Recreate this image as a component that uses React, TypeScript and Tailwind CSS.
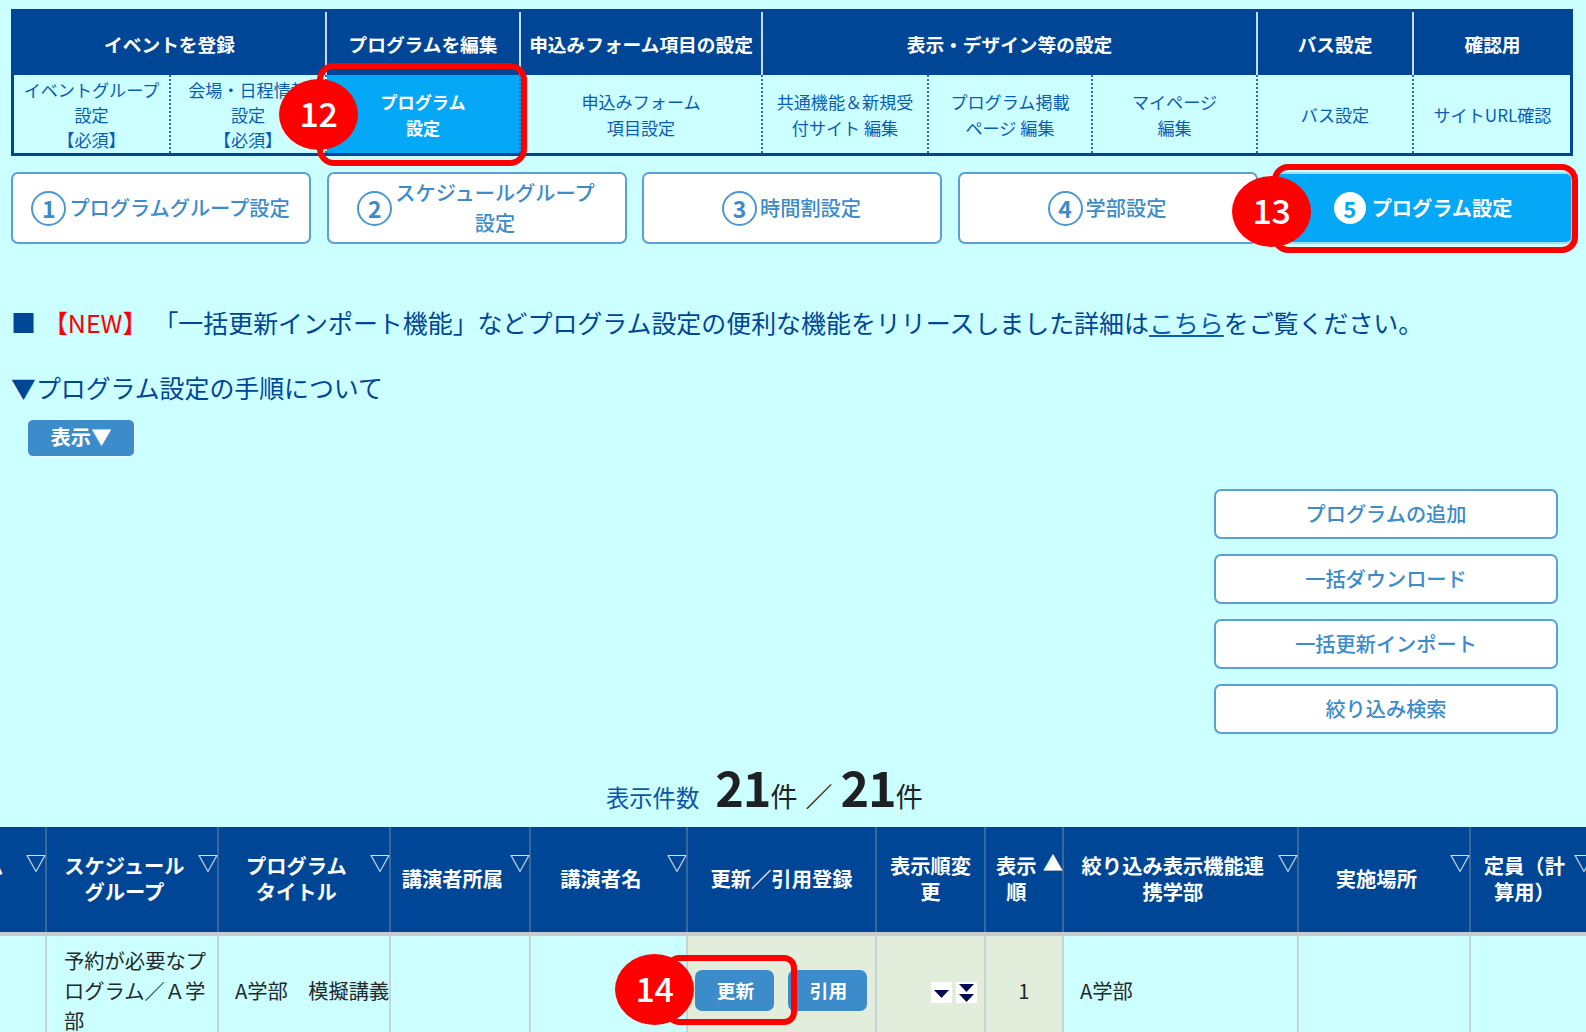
import { clsx } from "clsx";

type NavGroup = {
  title: string;
  width: string;
  items: { label: string; width: string; active?: boolean }[];
};

const navGroups: NavGroup[] = [
  {
    title: "イベントを登録",
    width: "w-[313px]",
    items: [
      { label: "イベントグループ\n設定\n【必須】", width: "w-[157px]" },
      { label: "会場・日程情報\n設定\n【必須】", width: "w-[156px]" },
    ],
  },
  {
    title: "プログラムを編集",
    width: "w-[194px]",
    items: [{ label: "プログラム\n設定", width: "w-[194px]", active: true }],
  },
  {
    title: "申込みフォーム項目の設定",
    width: "w-[242px]",
    items: [{ label: "申込みフォーム\n項目設定", width: "w-[242px]" }],
  },
  {
    title: "表示・デザイン等の設定",
    width: "w-[495px]",
    items: [
      { label: "共通機能＆新規受\n付サイト 編集", width: "w-[166px]" },
      { label: "プログラム掲載\nページ 編集", width: "w-[164px]" },
      { label: "マイページ\n編集", width: "w-[165px]" },
    ],
  },
  {
    title: "バス設定",
    width: "w-[156px]",
    items: [{ label: "バス設定", width: "w-[156px]" }],
  },
  {
    title: "確認用",
    width: "w-[157px]",
    items: [{ label: "サイトURL確認", width: "w-[157px]" }],
  },
];

const steps = [
  { no: 1, label: "プログラムグループ設定" },
  { no: 2, label: "スケジュールグループ\n設定" },
  { no: 3, label: "時間割設定" },
  { no: 4, label: "学部設定" },
  { no: 5, label: "プログラム設定", active: true },
];

const actions = ["プログラムの追加", "一括ダウンロード", "一括更新インポート", "絞り込み検索"];

const columns = [
  { label: "スケジュール\nグループ", sort: "▽" },
  { label: "プログラム\nタイトル", sort: "▽" },
  { label: "講演者所属", sort: "▽" },
  { label: "講演者名", sort: "▽" },
  { label: "更新／引用登録" },
  { label: "表示順変\n更" },
  { label: "表示\n順", sort: "▲" },
  { label: "絞り込み表示機能連\n携学部", sort: "▽" },
  { label: "実施場所", sort: "▽" },
  { label: "定員（計\n算用）", sort: "▽" },
];

const tableGrid =
  "grid w-[1595px] grid-cols-[47px_172px_172px_140px_157px_189px_109px_78px_235px_172px_124px]";

function Navigation() {
  return (
    <nav className="flex h-[147px] w-[1562px] border-[3px] border-[#004696] text-center">
      {navGroups.map((group, i) => (
        <div key={group.title} className={clsx("flex shrink-0 flex-col", group.width)}>
          <div
            className={clsx(
              "flex h-[63px] items-center justify-center bg-[#004696] pt-0.5 text-[18.7px] font-bold whitespace-nowrap text-white",
              i < navGroups.length - 1 && "border-r-2 border-[#c9dcee]",
            )}
          >
            {group.title}
          </div>
          <div className="flex h-[78px]">
            {group.items.map((item, j) => (
              <div
                key={item.label}
                className={clsx(
                  "flex shrink-0 items-center justify-center pt-px text-[17.1px] leading-[25.3px] whitespace-pre",
                  item.width,
                  item.active ? "bg-[#04a8f6] font-bold text-white" : "text-[#0b5cb4]",
                  (i < navGroups.length - 1 || j < group.items.length - 1) &&
                    "border-r-2 border-dotted border-[#2a6cb4]",
                )}
              >
                {item.label}
              </div>
            ))}
          </div>
        </div>
      ))}
    </nav>
  );
}

function StepTabs() {
  return (
    <div className="mt-4 flex w-[1562px] justify-between">
      {steps.map((step) => (
        <button
          key={step.no}
          type="button"
          className={clsx(
            "flex h-[72px] w-[300px] items-center justify-center rounded-[7px] border-2 text-[20.2px] leading-[30px] whitespace-pre",
            step.active
              ? "border-[#9be0fb] bg-[#04a8f6] font-bold text-white"
              : "border-[#5c9fd6] bg-white pr-px font-medium text-[#3c8bca]",
          )}
        >
          <span
            className={clsx(
              "flex shrink-0 items-center justify-center rounded-full font-bold",
              step.active
                ? "mr-1.5 size-8 bg-white text-[22px] text-[#04a8f6]"
                : "mr-[3px] size-[35px] border-2 border-[#4d97d1] text-[23px]",
            )}
          >
            {step.no}
          </span>
          {step.label}
        </button>
      ))}
    </div>
  );
}

function MoveIcon({ double }: { double?: boolean }) {
  return (
    <svg className="size-[21px] bg-white" viewBox="0 0 21 21" fill="#000c50">
      {double ? <path d="M3 2h15l-7.5 8zM3 12h15l-7.5 8z" /> : <path d="M3 8h15l-7.5 8z" />}
    </svg>
  );
}

function ProgramTable() {
  return (
    <div className="text-[20.3px]">
      <div className={clsx(tableGrid, "h-[105px] bg-[#004696] font-bold text-white")}>
        <div className="relative flex border-r-2 border-[#386898]">
          <span className="absolute top-[25px] -left-[17px] leading-[26px]">ム</span>
          <span className="mt-5 -mr-px ml-auto leading-[30px] font-medium">▽</span>
        </div>
        {columns.map((column) => (
          <div key={column.label} className="flex border-r-2 border-[#386898]">
            <span className="flex flex-1 items-center justify-center pb-1 text-center leading-[26px] whitespace-pre">
              {column.label}
            </span>
            {column.sort && (
              <span className="mt-5 -mr-px -ml-1 leading-[30px] font-medium">{column.sort}</span>
            )}
          </div>
        ))}
      </div>
      <div
        className={clsx(
          tableGrid,
          "h-[112px] border-t-[4px] border-[#c8cccf] text-[#24282c] *:flex *:items-center *:border-r-2 *:border-[#c8d4d4] *:whitespace-pre",
        )}
      >
        <div />
        <div className="pl-[17px] leading-[30.3px]">{"予約が必要なプ\nログラム／Ａ学\n部"}</div>
        <div className="overflow-hidden pl-4">A学部　模擬講義</div>
        <div />
        <div />
        <div className="gap-[14px] bg-[#e2eedb] pl-[7px]">
          <button
            type="button"
            className="h-[41px] w-[79px] rounded-[7px] bg-[#3c8bca] pl-0.5 text-[18.7px] font-bold text-white"
          >
            更新
          </button>
          <button
            type="button"
            className="h-[41px] w-[79px] rounded-[7px] bg-[#3c8bca] pl-0.5 text-[18.7px] font-bold text-white"
          >
            引用
          </button>
        </div>
        <div className="justify-end gap-1 bg-[#e2eedb] pt-1 pr-[7px]">
          <MoveIcon />
          <MoveIcon double />
        </div>
        <div className="justify-center bg-[#e2eedb]">1</div>
        <div className="pl-4">A学部</div>
        <div />
        <div />
      </div>
    </div>
  );
}

function Callout({ no, frame, badge }: { no: number; frame: string; badge: string }) {
  return (
    <>
      <div className={clsx("absolute border-[6px] border-[#ff0000]", frame)} />
      <div
        className={clsx(
          "absolute flex h-[71px] w-[79px] items-center justify-center rounded-[50%] bg-[#ff0000] pb-1 text-[34px] font-medium tracking-[-0.5px] text-white",
          badge,
        )}
      >
        {no}
      </div>
    </>
  );
}

export default function App() {
  return (
    <div className="relative h-[1032px] w-[1586px] overflow-hidden bg-[#ccffff] font-['Noto_Sans_CJK_JP',sans-serif] text-[#004696]">
      <div className="pt-[9px] pl-[11px]">
        <Navigation />
        <StepTabs />

        <p className="mt-[60px] flex text-[24.95px] leading-9 whitespace-pre">
          ■<span className="ml-[7px] text-[#ff0000]">【NEW】</span>
          <span className="ml-1.5">
            「一括更新インポート機能」などプログラム設定の便利な機能をリリースしました詳細は
            <a className="text-[#0b5cb4] underline decoration-2 underline-offset-2">こちら</a>
            をご覧ください。
          </span>
        </p>
        <p className="mt-[29px] text-[24.9px] leading-9">▼プログラム設定の手順について</p>
        <button
          type="button"
          className="mt-[14px] ml-4 block h-[38px] w-[108px] rounded-md border border-[#eef8ff] bg-[#3c8bca] text-[20.3px] leading-[33px] font-bold text-white"
        >
          <span className="block h-9">表示▼</span>
        </button>
      </div>

      <div className="mt-8 ml-[1214px] flex w-[344px] flex-col gap-[15px]">
        {actions.map((action) => (
          <button
            key={action}
            type="button"
            className="h-[50px] rounded-[7px] border-2 border-[#5c9fd6] bg-white text-[20.2px] font-medium text-[#3c8bca]"
          >
            {action}
          </button>
        ))}
      </div>

      <div className="mt-4 mb-1 ml-[606px] flex h-[73px] items-baseline text-[27px] leading-[73px] whitespace-pre text-[#1e2024]">
        <span className="mr-4 text-[23.3px] text-[#0c55a4]">表示件数</span>
        <span className="text-[48.5px] font-bold tracking-[-1px]">21</span>件
        <span className="mx-[8px]">／</span>
        <span className="text-[48.5px] font-bold tracking-[-1px]">21</span>件
      </div>

      <ProgramTable />

      <Callout
        no={12}
        frame="top-[63px] left-[317px] h-[103px] w-[210px] rounded-[17px]"
        badge="top-[79px] left-[279px]"
      />
      <Callout
        no={13}
        frame="top-[164px] left-[1272px] h-[89px] w-[306px] rounded-[16px]"
        badge="top-[176px] left-[1232px]"
      />
      <Callout
        no={14}
        frame="top-[955px] left-[666px] h-[70px] w-[131px] rounded-[13px]"
        badge="top-[954px] left-[615px]"
      />
    </div>
  );
}
